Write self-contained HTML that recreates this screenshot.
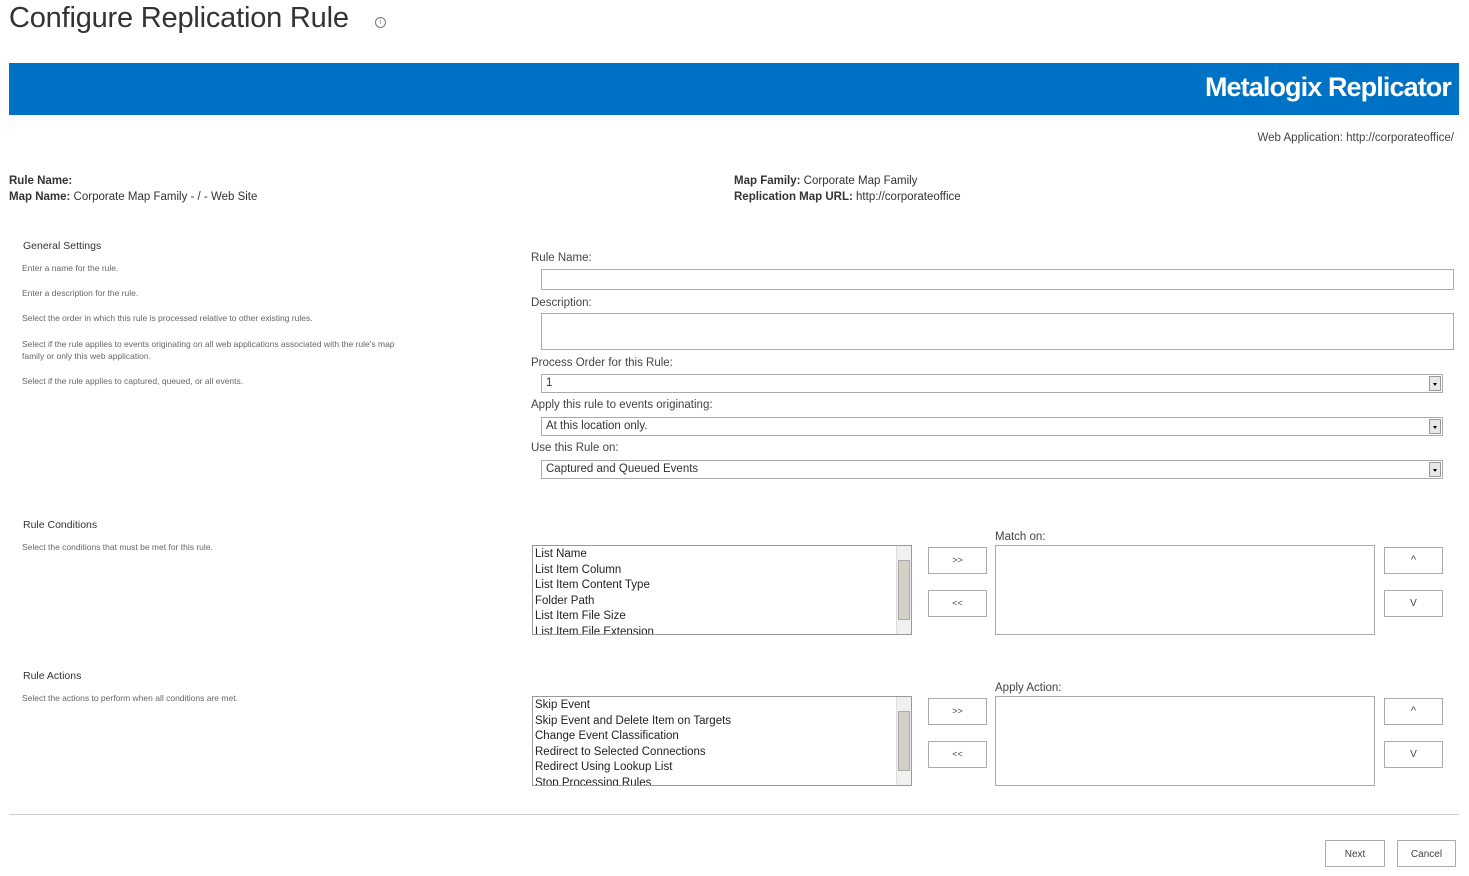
<!DOCTYPE html>
<html><head><meta charset="utf-8"><style>
body{margin:0;width:1469px;height:876px;background:#fff;font-family:"Liberation Sans",sans-serif;color:#444;position:relative;overflow:hidden}
.a{position:absolute;white-space:nowrap}
.t{font-size:11.5px;color:#444}
.s{font-size:8.5px;color:#666}
.h{font-size:10.5px;color:#333}
.box{position:absolute;border:1px solid #ababab;background:#fff;box-sizing:border-box}
.sel{position:absolute;border:1px solid #ababab;background:#fff;box-sizing:border-box;font-size:11.5px;color:#333;padding:2px 4px;height:19px}
.sel .ar{position:absolute;right:1px;top:1px;width:12px;height:15px;background:#e8e8e8;border:1px solid #999;box-sizing:border-box}
.sel .ar:after{content:"";position:absolute;left:3px;top:6px;border-left:2.5px solid transparent;border-right:2.5px solid transparent;border-top:3px solid #000}
.lb{position:absolute;border:1px solid #999;background:#fff;box-sizing:border-box;overflow:hidden;font-size:11.5px;color:#222;line-height:15.5px;padding:1px 2px}
.sb{position:absolute;right:0;top:0;bottom:0;width:14px;background:#f0f0f0;border-left:1px solid #ddd}
.sb .th{position:absolute;left:1px;right:1px;top:14px;bottom:14px;background:#d4d0c8;border:1px solid #aaa}
.btn{position:absolute;border:1px solid #ababab;background:#fff;box-sizing:border-box;font-size:9px;color:#444;text-align:center}
</style></head><body>
<div class="a" style="left:9px;top:2px;font-size:29px;color:#333;font-weight:300;letter-spacing:-0.2px">Configure Replication Rule</div>
<div class="a" style="left:375px;top:17px;width:9px;height:9px;border:1px solid #777;border-radius:50%;font-size:7px;line-height:9px;text-align:center;color:#777">i</div>
<div class="a" style="left:9px;top:63px;width:1450px;height:52px;background:#0072c6"></div>
<div class="a" style="right:18px;top:72px;font-size:27px;color:#fff;font-weight:bold;letter-spacing:-0.9px">Metalogix Replicator</div>
<div class="a t" style="right:15px;top:132px">Web Application: http://corporateoffice/</div>
<div class="a t" style="left:9px;top:175px;color:#333"><b>Rule Name:</b></div>
<div class="a t" style="left:9px;top:191px;color:#333"><b>Map Name:</b> Corporate Map Family - / - Web Site</div>
<div class="a t" style="left:734px;top:175px;color:#333"><b>Map Family:</b> Corporate Map Family</div>
<div class="a t" style="left:734px;top:191px;color:#333"><b>Replication Map URL:</b> http://corporateoffice</div>
<div class="a h" style="left:23px;top:240px">General Settings</div>
<div class="a s" style="left:22px;top:263px">Enter a name for the rule.</div>
<div class="a s" style="left:22px;top:288px">Enter a description for the rule.</div>
<div class="a s" style="left:22px;top:313px">Select the order in which this rule is processed relative to other existing rules.</div>
<div class="a s" style="left:22px;top:338px;line-height:12px">Select if the rule applies to events originating on all web applications associated with the rule's map<br>family or only this web application.</div>
<div class="a s" style="left:22px;top:376px">Select if the rule applies to captured, queued, or all events.</div>
<div class="a t" style="left:531px;top:252px">Rule Name:</div>
<div class="box" style="left:541px;top:269px;width:913px;height:21px"></div>
<div class="a t" style="left:531px;top:297px">Description:</div>
<div class="box" style="left:541px;top:313px;width:913px;height:37px"></div>
<div class="a t" style="left:531px;top:357px">Process Order for this Rule:</div>
<div class="sel" style="left:541px;top:374px;width:902px">1<div class="ar"></div></div>
<div class="a t" style="left:531px;top:399px">Apply this rule to events originating:</div>
<div class="sel" style="left:541px;top:417px;width:902px">At this location only.<div class="ar"></div></div>
<div class="a t" style="left:531px;top:442px">Use this Rule on:</div>
<div class="sel" style="left:541px;top:460px;width:902px">Captured and Queued Events<div class="ar"></div></div>

<div class="a h" style="left:23px;top:519px">Rule Conditions</div>
<div class="a s" style="left:22px;top:542px">Select the conditions that must be met for this rule.</div>
<div class="lb" style="left:532px;top:545px;width:380px;height:90px">List Name<br>List Item Column<br>List Item Content Type<br>Folder Path<br>List Item File Size<br>List Item File Extension<div class="sb"><div class="th"></div></div></div>
<div class="btn" style="left:928px;top:547px;width:59px;height:27px;line-height:25px">&gt;&gt;</div>
<div class="btn" style="left:928px;top:590px;width:59px;height:27px;line-height:25px">&lt;&lt;</div>
<div class="a t" style="left:995px;top:531px">Match on:</div>
<div class="box" style="left:995px;top:545px;width:380px;height:90px"></div>
<div class="btn" style="left:1384px;top:547px;width:59px;height:27px;line-height:25px;font-size:11px">^</div>
<div class="btn" style="left:1384px;top:590px;width:59px;height:27px;line-height:25px;font-size:10px">V</div>

<div class="a h" style="left:23px;top:670px">Rule Actions</div>
<div class="a s" style="left:22px;top:693px">Select the actions to perform when all conditions are met.</div>
<div class="lb" style="left:532px;top:696px;width:380px;height:90px">Skip Event<br>Skip Event and Delete Item on Targets<br>Change Event Classification<br>Redirect to Selected Connections<br>Redirect Using Lookup List<br>Stop Processing Rules<div class="sb"><div class="th"></div></div></div>
<div class="btn" style="left:928px;top:698px;width:59px;height:27px;line-height:25px">&gt;&gt;</div>
<div class="btn" style="left:928px;top:741px;width:59px;height:27px;line-height:25px">&lt;&lt;</div>
<div class="a t" style="left:995px;top:682px">Apply Action:</div>
<div class="box" style="left:995px;top:696px;width:380px;height:90px"></div>
<div class="btn" style="left:1384px;top:698px;width:59px;height:27px;line-height:25px;font-size:11px">^</div>
<div class="btn" style="left:1384px;top:741px;width:59px;height:27px;line-height:25px;font-size:10px">V</div>

<div class="a" style="left:9px;top:814px;width:1450px;height:1px;background:#ccc"></div>
<div class="btn" style="left:1325px;top:840px;width:60px;height:27px;line-height:27px;font-size:10px">Next</div>
<div class="btn" style="left:1397px;top:840px;width:59px;height:27px;line-height:27px;font-size:10px">Cancel</div>
</body></html>
